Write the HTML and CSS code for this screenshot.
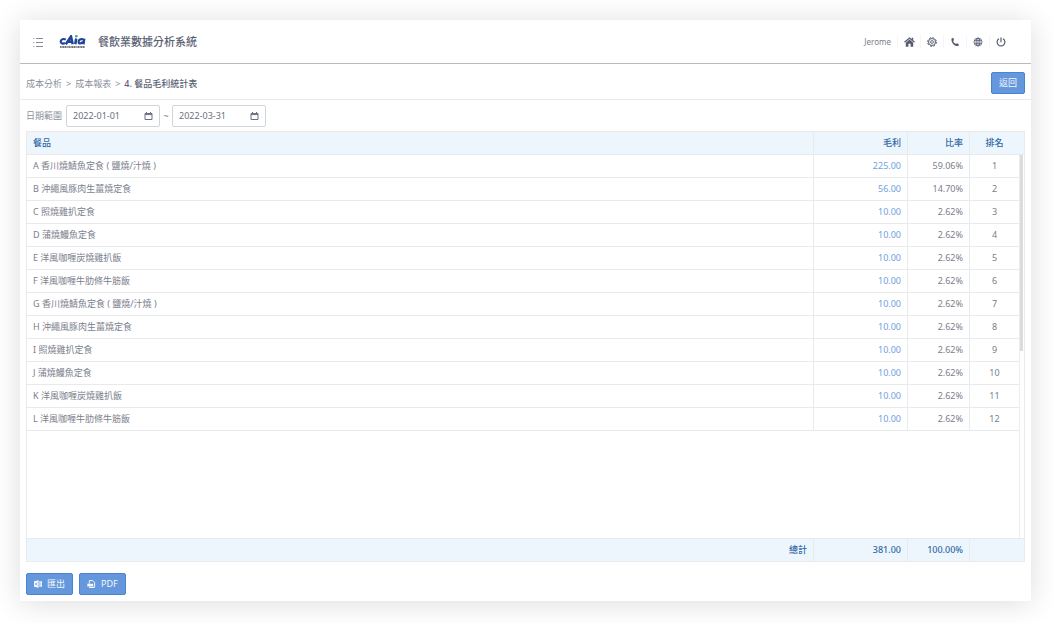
FILE: index.html
```html
<!DOCTYPE html>
<html lang="zh-Hant">
<head>
<meta charset="utf-8">
<meta name="viewport" content="width=device-width, initial-scale=1">
<title>餐飲業數據分析系統</title>
<link rel="stylesheet" href="styles.css">
</head>
<body>
<div class="app">
  <header class="topbar">
    <button class="icon-btn menu-btn" type="button" aria-label="選單">
      <svg width="10" height="10" viewBox="0 0 10 10" fill="none" stroke="currentColor" stroke-width="1"><path d="M3 1.500h7M3 5.500h7M3 9.500h7M.3 1.500h1M.3 5.500h1M.3 9.500h1"/></svg>
    </button>
    <a class="logo" href="#" aria-label="cAia">
      <svg width="27" height="14" viewBox="0 0 27 14">
        <g fill="none" stroke="#1f4596" stroke-width="2.200">
          <path d="M6.800 4.600C4.300 3.300 2 4.300 1.700 6.400C1.500 8.600 4 9 6 8"/>
          <path d="M6.800 9.300L12 1.500L13.700 9.300M9.300 6.800h4" stroke-width="2.500"/>
          <path d="M17.200 3.500L16.300 9.300" stroke-width="2.500"/>
          <path d="M24.700 4.600C21.500 3.200 19.700 5 19.600 6.800C19.500 9.200 22.500 8.800 24 6.600M25.400 3.600L24.500 9.300"/>
        </g>
        <path d="M16.300.3h2.500l-.4 2h-2.500z" fill="#35a457"/>
        <path d="M1 12h25" stroke="#77757f" stroke-width="1.800" stroke-dasharray="1.500 .4 .8 .3 1.100 .4"/>
      </svg>
    </a>
    <h1 class="title">餐飲業數據分析系統</h1>
    <nav class="tools">
      <span class="user">Jerome</span>
      <button class="icon-btn tool" type="button" aria-label="首頁">
        <svg width="11" height="10" viewBox="0 0 11 10"><path d="M.5 5.200L5.500 1l5 4.200" fill="none" stroke="currentColor" stroke-width="1.300"/><path d="M7.700.8h1.500v2.800L7.700 2.400zM1.800 5.700l3.700-3.100 3.700 3.100V9.700H6.600V6.800H4.400v2.900H1.800z" fill="currentColor"/></svg>
      </button>
      <button class="icon-btn tool" type="button" aria-label="設定">
        <svg width="10" height="10" viewBox="0 0 10 10" fill="none" stroke="currentColor"><circle cx="5" cy="5" r="3.500"/><circle cx="5" cy="5" r="4.400" stroke-width="1" stroke-dasharray="1.900 1.556"/><circle cx="5" cy="5" r="1.400" stroke-width=".9"/></svg>
      </button>
      <button class="icon-btn tool" type="button" aria-label="電話">
        <svg width="10" height="10" viewBox="0 0 10 10"><path d="M1.500 1.400L3 .8 4.200 3.100l-1.100.8c.5 1.500 1.500 2.500 3 3.200l.9-1L9 7.700 8.300 9C4.200 9.500.900 5.500 1.500 1.400z" fill="currentColor"/></svg>
      </button>
      <button class="icon-btn tool" type="button" aria-label="語言">
        <svg width="10" height="10" viewBox="0 0 10 10" fill="none" stroke="currentColor" stroke-width=".8"><circle cx="5" cy="5" r="4"/><ellipse cx="5" cy="5" rx="1.900" ry="4"/><path d="M1.300 3.600h7.400M1.300 6.400h7.400M5 1v8"/></svg>
      </button>
      <button class="icon-btn tool" type="button" aria-label="登出">
        <svg width="10" height="10" viewBox="0 0 10 10" fill="none" stroke="currentColor" stroke-width="1.200"><path d="M3 1.700a3.900 3.900 0 1 0 4 0M5 .4v4.800"/></svg>
      </button>
    </nav>
  </header>

  <div class="pathbar">
    <nav class="crumbs" aria-label="路徑">
      <a href="#">成本分析</a><span>&gt;</span><a href="#">成本報表</a><span>&gt;</span><strong>4. 餐品毛利統計表</strong>
    </nav>
    <button class="btn back" type="button">返回</button>
  </div>

  <main class="content">
    <form class="filters">
      <label for="from">日期範圍</label>
      <div class="date">
        <input id="from" type="text" value="2022-01-01">
        <svg width="9" height="8" viewBox="0 0 9 8"><path d="M1 1.500h7v6H1zM1 2.600h7M2.500 0v1.500M6.500 0v1.500" fill="none" stroke="currentColor"/></svg>
      </div>
      <span class="tilde">~</span>
      <div class="date">
        <input id="to" type="text" value="2022-03-31" aria-label="結束日期">
        <svg width="9" height="8" viewBox="0 0 9 8"><path d="M1 1.500h7v6H1zM1 2.600h7M2.500 0v1.500M6.500 0v1.500" fill="none" stroke="currentColor"/></svg>
      </div>
    </form>

    <table class="grid">
      <thead>
        <tr><th>餐品</th><th>毛利</th><th>比率</th><th>排名</th></tr>
      </thead>
      <tbody>
        <tr><td>A 香川燒鯖魚定食 ( 鹽燒/汁燒 )</td><td><a href="#">225.00</a></td><td>59.06%</td><td>1</td></tr>
        <tr><td>B 沖繩風豚肉生薑燒定食</td><td><a href="#">56.00</a></td><td>14.70%</td><td>2</td></tr>
        <tr><td>C 照燒雞扒定食</td><td><a href="#">10.00</a></td><td>2.62%</td><td>3</td></tr>
        <tr><td>D 蒲燒鰻魚定食</td><td><a href="#">10.00</a></td><td>2.62%</td><td>4</td></tr>
        <tr><td>E 洋風咖喱炭燒雞扒飯</td><td><a href="#">10.00</a></td><td>2.62%</td><td>5</td></tr>
        <tr><td>F 洋風咖喱牛肋條牛筋飯</td><td><a href="#">10.00</a></td><td>2.62%</td><td>6</td></tr>
        <tr><td>G 香川燒鯖魚定食 ( 鹽燒/汁燒 )</td><td><a href="#">10.00</a></td><td>2.62%</td><td>7</td></tr>
        <tr><td>H 沖繩風豚肉生薑燒定食</td><td><a href="#">10.00</a></td><td>2.62%</td><td>8</td></tr>
        <tr><td>I 照燒雞扒定食</td><td><a href="#">10.00</a></td><td>2.62%</td><td>9</td></tr>
        <tr><td>J 蒲燒鰻魚定食</td><td><a href="#">10.00</a></td><td>2.62%</td><td>10</td></tr>
        <tr><td>K 洋風咖喱炭燒雞扒飯</td><td><a href="#">10.00</a></td><td>2.62%</td><td>11</td></tr>
        <tr><td>L 洋風咖喱牛肋條牛筋飯</td><td><a href="#">10.00</a></td><td>2.62%</td><td>12</td></tr>
      </tbody>
      <tfoot>
        <tr><th>總計</th><td>381.00</td><td>100.00%</td><td></td></tr>
      </tfoot>
    </table>

    <div class="actions">
      <button class="btn" type="button">
        <svg width="8" height="8" viewBox="0 0 8 8"><path d="M0 1.300L4.600.300v7.400L0 6.700zM5.200 1.200H8v5.600H5.200z" fill="currentColor"/><path d="M1.300 2.700l2 2.600M3.300 2.700l-2 2.600M5.200 3h2M5.200 5h2" stroke="#6497db" stroke-width=".7"/></svg>
        匯出
      </button>
      <button class="btn" type="button">
        <svg width="9" height="8" viewBox="0 0 9 8"><path d="M2.300 3.600V.6h3.500l1.800 1.800v4.900H6.800" fill="none" stroke="currentColor"/><path d="M.3 3.700h5.900v2.800H.3zM2 7h5v1H2z" fill="currentColor"/></svg>
        PDF
      </button>
    </div>
  </main>
</div>
</body>
</html>
```
FILE: styles.css
```css
* {
  box-sizing: border-box;
}

body {
  margin: 0;
  min-height: 100vh;
  display: flex;
  padding: 20px 22px 22px 20px;
  background: #fff;
  color: #7a7e8c;
  font: 9px/12px "Noto Sans", "Noto Sans CJK TC", sans-serif;
}

button,
input {
  font: inherit;
  color: inherit;
}

a {
  color: inherit;
  text-decoration: none;
}

svg {
  display: block;
  flex: none;
}

.app {
  flex: 1;
  min-width: 0;
  display: flex;
  flex-direction: column;
  background: #fff;
  box-shadow: 0 2px 28px rgba(0, 0, 0, 0.14);
}

.topbar {
  display: flex;
  align-items: center;
  height: 44px;
  padding: 0 19px 0 13px;
  border-bottom: 1px solid #b9bcbd;
}

.icon-btn {
  display: flex;
  align-items: center;
  justify-content: center;
  padding: 0;
  border: 0;
  background: none;
  color: #555c6e;
}

.menu-btn {
  margin-right: 16px;
  color: #858a98;
}

.title {
  margin: 0 0 0 12px;
  font-size: 11px;
  line-height: 16px;
  font-weight: 500;
  color: #5c6274;
}

.tools {
  display: flex;
  align-items: center;
  margin-left: auto;
}

.user {
  margin-right: 6px;
  font-size: 8px;
}

.tool {
  width: 23px;
  height: 14px;
  border-left: 1px solid #f6f6f8;
}

.pathbar {
  display: flex;
  align-items: center;
  justify-content: space-between;
  padding: 8px 6px 5px;
  border-bottom: 1px solid #e9e9eb;
}

.crumbs {
  display: flex;
  gap: 4px;
  padding-top: 1px;
  color: #8d919e;
}

.crumbs strong {
  font-weight: 500;
  color: #5c6274;
}

.btn {
  display: flex;
  align-items: center;
  gap: 5px;
  height: 22px;
  padding: 0 7px;
  border: 1px solid #4a83d0;
  border-radius: 2px;
  background: #6497db;
  color: #f4f8fd;
}

.content {
  flex: 1;
  display: flex;
  flex-direction: column;
  padding: 5px 6px 6px;
}

.filters {
  display: flex;
  align-items: center;
  margin-bottom: 4px;
}

.filters label {
  margin-right: 4px;
  color: #8d919e;
}

.date {
  display: flex;
  align-items: center;
  width: 94px;
  height: 22px;
  padding: 0 6px;
  border: 1px solid #cfd5d9;
  border-radius: 2px;
  color: #6b7080;
}

.date input {
  flex: 1;
  min-width: 0;
  padding: 0;
  border: 0;
  outline: 0;
  background: none;
}

.tilde {
  width: 12px;
  text-align: center;
}

.grid {
  flex: 1;
  display: flex;
  flex-direction: column;
  border: 1px solid #e8eaec;
}

.grid thead,
.grid tfoot {
  display: block;
  background: #eef6fd;
  color: #2f68a5;
}

.grid tbody {
  flex: 1;
  display: block;
  padding-right: 5px;
  background:
    linear-gradient(#dcdcde, #dcdcde) right 1px top / 3px 196px no-repeat,
    linear-gradient(#ececee, #ececee) right 4px top / 1px 100% no-repeat;
}

.grid tr {
  display: grid;
  grid-template-columns: 1fr 94px 62px 50px;
  height: 23px;
  border-bottom: 1px solid #e8eaec;
}

.grid thead tr,
.grid tfoot tr {
  padding-right: 5px;
}

.grid tfoot tr {
  border-top: 1px solid #e8eaec;
  border-bottom: 0;
}

.grid th,
.grid td {
  padding: 5px 6px;
  border-left: 1px solid #e8eaec;
  font-weight: 400;
  text-align: right;
}

.grid thead th,
.grid tfoot th,
.grid tfoot td {
  font-weight: 500;
}

.grid th:first-child,
.grid td:first-child {
  border-left: 0;
  text-align: left;
}

.grid tfoot th:first-child {
  text-align: right;
}

.grid th:last-child,
.grid td:last-child {
  padding: 5px 0;
  text-align: center;
}

.grid td a {
  color: #6f9fe0;
}

.actions {
  display: flex;
  gap: 6px;
  margin-top: 11px;
}
```
